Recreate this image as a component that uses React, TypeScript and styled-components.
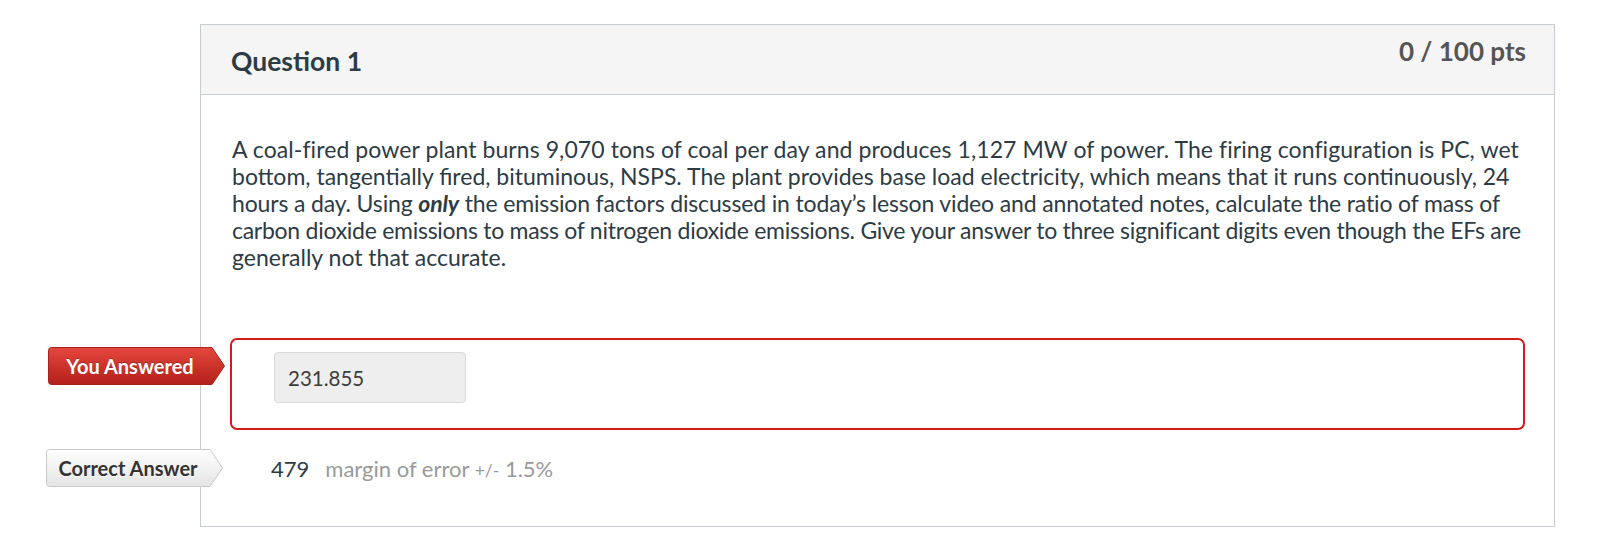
import * as React from 'react';
import styled, { createGlobalStyle } from 'styled-components';

const GlobalStyle = createGlobalStyle`
  html, body {
    margin: 0;
    padding: 0;
    background: #ffffff;
  }
  body {
    font-family: Lato, "Open Sans", "Liberation Sans", sans-serif;
    color: #2d3b45;
  }
`;

const Page = styled.div`
  padding: 24px 0 0 200px;
`;

const QuestionCard = styled.div`
  width: 1355px;
  box-sizing: border-box;
  border: 1px solid #c7cdd1;
  background: #fff;
`;

const Header = styled.div`
  display: flex;
  justify-content: space-between;
  align-items: flex-start;
  height: 69px;
  padding: 0 28px 0 30px;
  background: #f5f5f5;
  border-bottom: 1px solid #c7cdd1;
`;

const Title = styled.h2`
  margin: 21px 0 0;
  font-size: 26.5px;
  line-height: 1.2;
  font-weight: 700;
  color: #2d3b45;
`;

const Points = styled.div`
  margin-top: 11px;
  font-size: 26px;
  line-height: 1.2;
  font-weight: 700;
  color: #555;
`;

const Body = styled.div`
  padding: 41px 29px 39px;
`;

// line breaks follow the reference wrap
const QuestionText = styled.p`
  margin: 0 2px;
  font-size: 23px;
  line-height: 27px;
  white-space: nowrap;
  color: #2d3b45;

  em {
    font-weight: 700;
  }
`;

const TextLine = styled.span<{ $track?: number }>`
  display: block;
  letter-spacing: ${({ $track = 0 }) => $track}px;
`;

const Answers = styled.div`
  margin-top: 67px;
`;

const AnswerRow = styled.div<{ $wrong?: boolean }>`
  position: relative;
  box-sizing: border-box;
  ${({ $wrong }) =>
    $wrong
      ? `
    height: 92px;
    padding: 12px 0 0 42px;
    border: 2px solid #d21c1c;
    border-radius: 7px;
  `
      : `
    display: flex;
    align-items: center;
    height: 38px;
    margin-top: 19px;
    padding-left: 41px;
  `}
`;

const ArrowLabel = styled.div<{ $top: number; $left: number }>`
  position: absolute;
  top: ${({ $top }) => $top}px;
  left: ${({ $left }) => $left}px;
  width: 177px;
  height: 38px;
`;

const ArrowShape = styled.svg`
  position: absolute;
  inset: 0;
  width: 100%;
  height: 100%;
  overflow: visible;
`;

const ArrowText = styled.span<{ $wrong?: boolean }>`
  position: relative;
  display: block;
  width: 164px;
  text-align: center;
  font-size: 20px;
  line-height: 38px;
  font-weight: 700;
  color: ${({ $wrong }) => ($wrong ? '#ffffff' : '#333')};
  text-shadow: ${({ $wrong }) =>
    $wrong ? '0 -1px 0 rgba(0,0,0,0.25)' : '0 1px 0 rgba(255,255,255,0.8)'};
`;

const AnswerField = styled.div`
  width: 192px;
  height: 51px;
  box-sizing: border-box;
  padding-left: 13px;
  display: flex;
  align-items: center;
  background: #eeeeee;
  border: 1px solid #d9d9d9;
  border-radius: 4px;
  font-size: 20.5px;
  color: #3d3d3d;
`;

const CorrectValue = styled.span`
  font-size: 22px;
  color: #2d3b45;
`;

const Margin = styled.span`
  margin-left: 16px;
  font-size: 22px;
  color: #9a9a9a;

  small {
    font-size: 17.5px;
  }
`;

const Arrow = ({ wrong }: { wrong?: boolean }) => {
  const id = wrong ? 'gradWrong' : 'gradRight';
  return (
    <ArrowShape viewBox="0 0 177 38" preserveAspectRatio="none">
      <defs>
        <linearGradient id={id} x1="0" y1="0" x2="0" y2="1">
          {wrong ? (
            <>
              <stop offset="0" stopColor="#e5473d" />
              <stop offset="1" stopColor="#b2201a" />
            </>
          ) : (
            <>
              <stop offset="0" stopColor="#ffffff" />
              <stop offset="1" stopColor="#e4e4e4" />
            </>
          )}
        </linearGradient>
      </defs>
      <path
        d="M3.5 0.5 H164 L176.5 19 L164 37.5 H3.5 Q0.5 37.5 0.5 34.5 V3.5 Q0.5 0.5 3.5 0.5 Z"
        fill={`url(#${id})`}
        stroke={wrong ? '#a8211b' : '#c9c9c9'}
        strokeWidth="1"
      />
    </ArrowShape>
  );
};

export default function App() {
  return (
    <Page>
      <GlobalStyle />
      <QuestionCard>
        <Header>
          <Title>Question 1</Title>
          <Points>0 / 100 pts</Points>
        </Header>
        <Body>
          <QuestionText>
            <TextLine $track={0.08}>
              A coal-fired power plant burns 9,070 tons of coal per day and produces 1,127 MW of power. The
              firing configuration is PC, wet
            </TextLine>
            <TextLine>
              bottom, tangentially fired, bituminous, NSPS. The plant provides base load electricity, which
              means that it runs continuously, 24
            </TextLine>
            <TextLine $track={-0.15}>
              hours a day. Using <em>only</em> the emission factors discussed in today’s lesson video and
              annotated notes, calculate the ratio of mass of
            </TextLine>
            <TextLine $track={-0.27}>
              carbon dioxide emissions to mass of nitrogen dioxide emissions. Give your answer to three
              significant digits even though the EFs are
            </TextLine>
            <TextLine>generally not that accurate.</TextLine>
          </QuestionText>
          <Answers>
            <AnswerRow $wrong>
              <ArrowLabel $top={7} $left={-184}>
                <Arrow wrong />
                <ArrowText $wrong>You Answered</ArrowText>
              </ArrowLabel>
              <AnswerField>231.855</AnswerField>
            </AnswerRow>
            <AnswerRow>
              <ArrowLabel $top={0} $left={-184}>
                <Arrow />
                <ArrowText>Correct Answer</ArrowText>
              </ArrowLabel>
              <CorrectValue>479</CorrectValue>
              <Margin>
                margin of error <small>+/-</small> 1.5%
              </Margin>
            </AnswerRow>
          </Answers>
        </Body>
      </QuestionCard>
    </Page>
  );
}
